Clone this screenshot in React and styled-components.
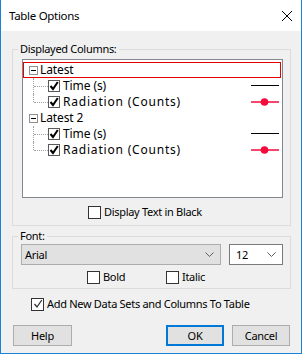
import React from "react";
import styled, { createGlobalStyle } from "styled-components";

const GlobalStyle = createGlobalStyle`
  html, body {
    margin: 0;
    padding: 0;
    background: #f0f0f0;
  }
  body {
    font-family: "Noto Sans", "Open Sans", sans-serif;
    font-size: 11px;
    letter-spacing: -0.3px;
    color: #000;
  }
`;

const Window = styled.div`
  width: 302px;
  height: 354px;
  box-sizing: border-box;
  border: 1px solid #1883d7;
  border-top: none;
  background: #f0f0f0;
  display: flex;
  flex-direction: column;
`;

const TitleBar = styled.div`
  height: 31px;
  flex-shrink: 0;
  background: #fff;
  display: flex;
  align-items: center;
  justify-content: space-between;
  padding: 0 9px 0 8px;
`;

const Title = styled.span`
  font-size: 11.5px;
  color: #000;
`;

const Body = styled.div`
  display: flex;
  flex-direction: column;
  padding: 10px 10px 0 11px;
`;

const Group = styled.fieldset`
  margin: 0;
  margin-top: ${(p) => p.mt || 0}px;
  padding: 0;
  border: 1px solid #dcdcdc;
  min-width: 0;
`;

const Legend = styled.legend`
  padding: 0 2px;
  margin-left: 5px;
  line-height: 16px;
`;

const GroupInner = styled.div`
  display: flex;
  flex-direction: column;
  padding: ${(p) => p.pad};
`;

const Tree = styled.div`
  height: 139px;
  box-sizing: border-box;
  border: 1px solid #828790;
  background: #fff;
  padding: 2px 1px 0 0;
  display: flex;
  flex-direction: column;
`;

const Row = styled.div`
  height: 16px;
  box-sizing: border-box;
  border: 1px solid ${(p) => (p.selected ? "#e50000" : "transparent")};
  display: flex;
  align-items: center;
  padding-left: ${(p) => p.indent}px;
  white-space: nowrap;
`;

const Expander = styled.span`
  width: 9px;
  height: 9px;
  box-sizing: border-box;
  border: 1px solid #919191;
  position: relative;
  flex-shrink: 0;
  &::after {
    content: "";
    position: absolute;
    left: 1px;
    right: 1px;
    top: 3px;
    border-top: 1px solid #000;
  }
`;

const Connector = styled.span`
  position: relative;
  width: 15px;
  align-self: stretch;
  flex-shrink: 0;
  margin-top: -1px;
  margin-bottom: -1px;
  &::before {
    content: "";
    position: absolute;
    left: 0;
    top: 0;
    height: ${(p) => (p.last ? "50%" : "100%")};
    border-left: 1px dotted #a0a0a0;
  }
  &::after {
    content: "";
    position: absolute;
    left: 1px;
    right: 0;
    top: 50%;
    border-top: 1px dotted #a0a0a0;
  }
`;

const TreeBox = styled.span`
  width: 12px;
  height: 12px;
  box-sizing: border-box;
  border: 1px solid #5a5a5a;
  background: #fff;
  flex-shrink: 0;
  display: flex;
  align-items: center;
  justify-content: center;
`;

const Label = styled.span`
  margin-left: ${(p) => p.ml || 0}px;
  line-height: 16px;
`;

const TreeLabel = styled.span`
  margin-left: ${(p) => p.ml || 0}px;
  line-height: 16px;
  font-size: 12px;
  letter-spacing: ${(p) => p.ls}px;
`;

const Swatch = styled.svg`
  margin-left: auto;
  margin-right: 1px;
  flex-shrink: 0;
`;

const CheckRow = styled.div`
  display: flex;
  align-items: center;
  height: 16px;
  margin-top: ${(p) => p.mt || 0}px;
  padding-left: ${(p) => p.indent || 0}px;
`;

const CheckItem = styled.label`
  display: flex;
  align-items: center;
  width: ${(p) => (p.w ? `${p.w}px` : "auto")};
`;

const Box = styled.span`
  width: 13px;
  height: 13px;
  box-sizing: border-box;
  border: 1px solid #333;
  background: #fff;
  flex-shrink: 0;
  display: flex;
  align-items: center;
  justify-content: center;
`;

const ComboRow = styled.div`
  display: flex;
  gap: 8px;
`;

const Combo = styled.div`
  width: ${(p) => p.w}px;
  height: 21px;
  box-sizing: border-box;
  border: 1px solid ${(p) => (p.flat ? "#7a7a7a" : "#adadad")};
  background: ${(p) => (p.flat ? "#fff" : "#e1e1e1")};
  display: flex;
  align-items: center;
  justify-content: space-between;
  padding: 0 6px 0 ${(p) => p.pl}px;
`;

const ButtonRow = styled.div`
  display: flex;
  gap: 8px;
  margin-top: 13px;
  padding: 0 1px;
`;

const Button = styled.button`
  width: ${(p) => p.w || 58}px;
  height: 21px;
  box-sizing: border-box;
  border: ${(p) => (p.primary ? "2px solid #0078d7" : "1px solid #adadad")};
  background: #e1e1e1;
  font-family: inherit;
  font-size: inherit;
  letter-spacing: inherit;
  color: #000;
  padding: 0;
  margin-left: ${(p) => (p.push ? "auto" : "0")};
`;

const Chevron = () => (
  <svg width="9" height="5" viewBox="0 0 9 5">
    <path d="M0.5 0.5 L4.5 4.5 L8.5 0.5" fill="none" stroke="#606060" strokeWidth="1" />
  </svg>
);

const Tick = ({ color = "#000", w = 2 }) => (
  <svg width="10" height="10" viewBox="0 0 10 10">
    <path d="M1.5 5 L4 8 L8.8 1" fill="none" stroke={color} strokeWidth={w} />
  </svg>
);

const PlainLine = () => (
  <Swatch width="28" height="10" viewBox="0 0 28 10">
    <line x1="0" y1="4.5" x2="28" y2="4.5" stroke="#000" strokeWidth="1" />
  </Swatch>
);

const DotLine = () => (
  <Swatch width="28" height="10" viewBox="0 0 28 10">
    <line x1="0" y1="5" x2="28" y2="5" stroke="#f50a3c" strokeWidth="1.5" />
    <circle cx="13.5" cy="5" r="3.8" fill="#f50a3c" />
  </Swatch>
);

const datasets = [
  { name: "Latest", selected: true },
  { name: "Latest 2", selected: false },
];

const App = () => {
  return (
    <>
      <GlobalStyle />
      <Window>
        <TitleBar>
          <Title>Table Options</Title>
          <svg width="10" height="10" viewBox="0 0 10 10">
            <path d="M0 0 L10 10 M10 0 L0 10" stroke="#000" strokeWidth="1" />
          </svg>
        </TitleBar>
        <Body>
          <Group>
            <Legend>Displayed Columns:</Legend>
            <GroupInner pad="2px 7px 5px 9px">
              <Tree>
                {datasets.map((ds) => (
                  <React.Fragment key={ds.name}>
                    <Row indent={5} selected={ds.selected}>
                      <Expander />
                      <TreeLabel ml={2} ls={-0.1}>
                        {ds.name}
                      </TreeLabel>
                    </Row>
                    <Row indent={9}>
                      <Connector />
                      <TreeBox>
                        <Tick />
                      </TreeBox>
                      <TreeLabel ml={3} ls={-0.1}>
                        Time (s)
                      </TreeLabel>
                      <PlainLine />
                    </Row>
                    <Row indent={9}>
                      <Connector last />
                      <TreeBox>
                        <Tick />
                      </TreeBox>
                      <TreeLabel ml={3} ls={0.8}>
                        Radiation (Counts)
                      </TreeLabel>
                      <DotLine />
                    </Row>
                  </React.Fragment>
                ))}
              </Tree>
              <CheckRow mt={6} indent={66}>
                <CheckItem>
                  <Box />
                  <Label ml={3}>Display Text in Black</Label>
                </CheckItem>
              </CheckRow>
            </GroupInner>
          </Group>

          <Group mt={2}>
            <Legend>Font:</Legend>
            <GroupInner pad="0 7px 3px 8px">
              <ComboRow>
                <Combo w={200} pl={3}>
                  <span>Arial</span>
                  <Chevron />
                </Combo>
                <Combo w={54} pl={6} flat>
                  <span>12</span>
                  <Chevron />
                </Combo>
              </ComboRow>
              <CheckRow mt={4} indent={66}>
                <CheckItem w={79}>
                  <Box />
                  <Label ml={3}>Bold</Label>
                </CheckItem>
                <CheckItem>
                  <Box />
                  <Label ml={3}>Italic</Label>
                </CheckItem>
              </CheckRow>
            </GroupInner>
          </Group>

          <CheckRow mt={7} indent={19}>
            <CheckItem>
              <Box>
                <Tick color="#333" w={1.3} />
              </Box>
              <Label ml={3}>Add New Data Sets and Columns To Table</Label>
            </CheckItem>
          </CheckRow>

          <ButtonRow>
            <Button w={59}>Help</Button>
            <Button primary push>
              OK
            </Button>
            <Button>Cancel</Button>
          </ButtonRow>
        </Body>
      </Window>
    </>
  );
};

export default App;
